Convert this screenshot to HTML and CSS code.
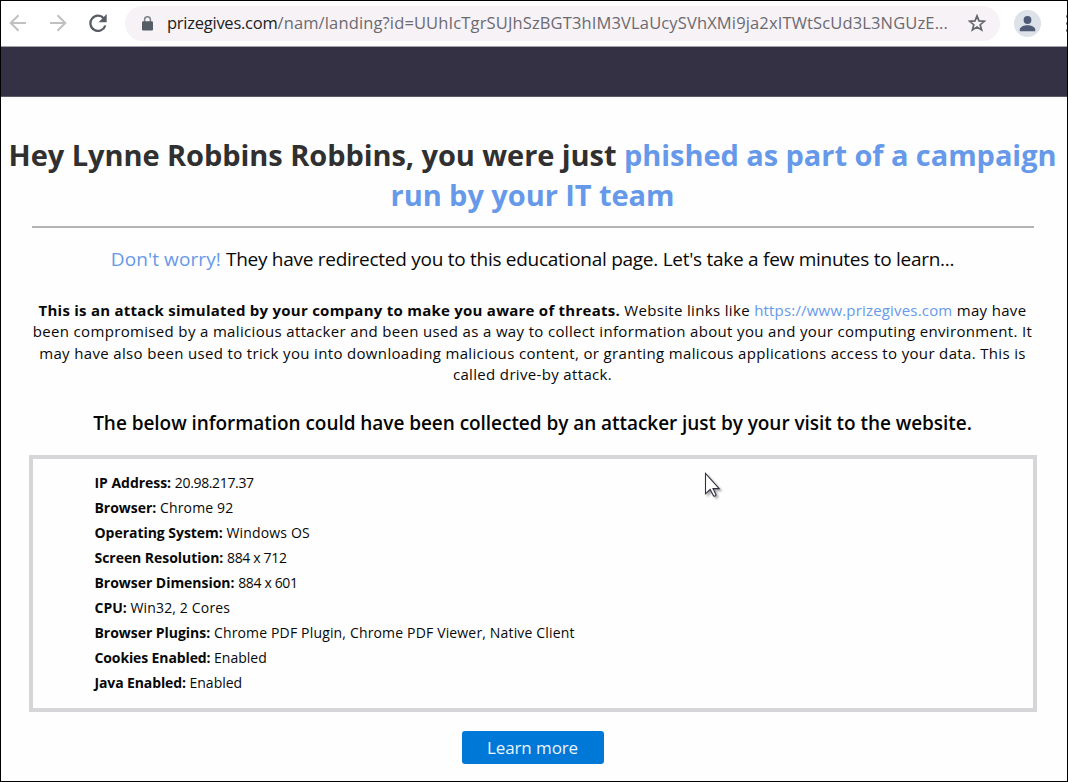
FILE: index.html
```html
<!DOCTYPE html>
<html lang="en">
<head>
<meta charset="utf-8">
<title>prizegives.com</title>
<link rel="stylesheet" href="styles.css">
</head>
<body>
<div class="window">
  <header class="toolbar">
    <svg class="nav-icon back" viewBox="0 0 18 18"><path d="M17 9H2M9.5 1.2 1.7 9l7.8 7.8"/></svg>
    <svg class="nav-icon forward" viewBox="0 0 18 18"><path d="M1 9h15M8.500 1.200 16.300 9l-7.800 7.800"/></svg>
    <svg class="reload" viewBox="0 0 18 18"><path class="arc" d="M14.700 4.200A7.600 7.600 0 1 0 16.300 11.500"/><path class="head" d="M17.700 0v8.200H9.600z"/></svg>
    <div class="address">
      <svg class="lock" viewBox="0 0 11 15"><path class="shackle" d="M2.600 6V3.700a2.900 2.900 0 0 1 5.800 0V6"/><rect y="5.200" width="11" height="9.300" rx="1.200"/></svg>
      <div class="url"><span class="host">prizegives.com</span><span class="path">/nam/landing?id=UUhIcTgrSUJhSzBGT3hIM3VLaUcySVhXMi9ja2xITWtScUd3L3NGUzE...</span></div>
      <svg class="star" viewBox="0 0 18 18"><path d="m9 1.900 2 5 5.400.4-4.200 3.400 1.400 5.300L9 13.100 4.400 16l1.400-5.300L1.600 7.300 7 6.900z"/></svg>
    </div>
    <svg class="avatar" viewBox="0 0 27 27"><circle class="disc" cx="13.500" cy="13.500" r="13.500"/><circle cx="13.500" cy="10" r="3.900"/><path d="M5.800 21.200v-1.700c0-2.700 4.600-4.200 7.700-4.200s7.700 1.500 7.700 4.200v1.700z"/></svg>
    <div class="menu"><i></i><i></i><i></i></div>
  </header>
  <div class="banner"></div>
  <main class="page">
    <h1>Hey Lynne Robbins Robbins, you were just <span class="blue">phished as part of a campaign<br>run by your IT team</span></h1>
    <hr>
    <p class="lead"><span class="blue worry">Don't worry! </span>They have redirected you to this educational page. Let's take a few minutes to learn...</p>
    <p class="body-text"><b>This is an attack simulated by your company to make you aware of threats.</b> Website links like <a class="blue">https://www.prizegives.com</a> may have<br>been compromised by a malicious attacker and been used as a way to collect information about you and your computing environment. It<br>may have also been used to trick you into downloading malicious content, or granting malicous applications access to your data. This is<br>called drive-by attack.</p>
    <h2>The below information could have been collected by an attacker just by your visit to the website.</h2>
    <ul class="details">
      <li><b>IP Address:</b> <span class="digits">20.98.217.37</span></li>
      <li><b>Browser:</b> Chrome 92</li>
      <li><b>Operating System:</b> Windows OS</li>
      <li><b>Screen Resolution:</b> <span class="digits">884 x 712</span></li>
      <li><b>Browser Dimension:</b> <span class="digits">884 x 601</span></li>
      <li><b>CPU:</b> Win32, 2 Cores</li>
      <li><b>Browser Plugins:</b> Chrome PDF Plugin, Chrome PDF Viewer, Native Client</li>
      <li class="tight"><b>Cookies Enabled:</b> Enabled</li>
      <li class="tight"><b>Java Enabled:</b> Enabled</li>
    </ul>
    <button class="learn">Learn more</button>
  </main>
  <svg class="cursor" viewBox="0 0 20 28"><path d="M1.500 1.500v20.300l4.600-4.300 3.600 6.500q1.800.5 2.300-1.200L9 16.600h6.200z"/></svg>
</div>
</body>
</html>
```
FILE: styles.css
```css
* { box-sizing: border-box; }
body { margin: 0; font-family: "Open Sans", "Noto Sans", sans-serif; color: #080808; background: #fff; }
.window { position: relative; width: 1068px; height: 782px; border: 1px solid #000; overflow: hidden; white-space: nowrap; background: #fefefe; }
.toolbar { display: flex; align-items: center; height: 46px; padding: 0 0 1px 8px; border-bottom: 1px solid #a4a3aa; background: #fff; }
.toolbar > * { flex: none; }
.nav-icon { width: 18px; height: 18px; fill: none; stroke: #c0c0c1; stroke-width: 2; }
.forward { margin-left: 22px; }
.reload { width: 18px; height: 18px; margin-left: 22px; }
.reload .arc { fill: none; stroke: #575c65; stroke-width: 2.300; }
.reload .head { fill: #575c65; }
.address { display: flex; align-items: center; width: 875px; height: 35px; margin-left: 18px; padding-left: 17px; border-radius: 18px; background: #f6f2f6; }
.lock { width: 11px; height: 15px; fill: #555d66; }
.lock .shackle { fill: none; stroke: #7c828a; stroke-width: 1.500; }
.url { width: 790px; margin-left: 14px; font-size: 16.5px; line-height: 24px; }
.host { letter-spacing: -0.25px; color: #202124; }
.path { letter-spacing: 0.14px; color: #6c6a70; }
.star { width: 18px; height: 18px; margin-left: 11px; fill: none; stroke: #66676b; stroke-width: 1.700; }
.avatar { width: 27px; height: 27px; margin-left: 14px; fill: #4f5b76; }
.avatar .disc { fill: #dce2e7; }
.menu { display: grid; gap: 4px; margin-left: 25px; }
.menu i { width: 3px; height: 3px; border-radius: 50%; background: #606368; }
.banner { height: 50px; background: #333143; border-bottom: 1px solid #5d5b69; }
.page { display: flex; flex-direction: column; align-items: center; padding: 38px 3px 0 0; text-align: center; }
.blue { color: #6699e9; }
h1 { margin: 0; font-size: 29px; line-height: 40px; font-weight: 700; letter-spacing: -0.06px; color: #303030; }
hr { width: 1002px; height: 2px; margin: 11px 0 0; border: 0; background: #b4b4b4; }
.lead { margin: 18px 0 0; font-size: 19px; line-height: 26px; letter-spacing: -0.27px; }
.worry { letter-spacing: 0.1px; }
.body-text { margin: 28px 0 0; font-size: 15px; line-height: 21.25px; letter-spacing: 0.34px; }
.body-text b { letter-spacing: 0.25px; }
.body-text a { letter-spacing: 0.18px; }
h2 { margin: 25px 0 0; font-size: 19px; line-height: 26px; font-weight: 600; letter-spacing: -0.05px; color: #050505; }
.details { width: 1008px; height: 257px; margin: 19px 0 0; padding: 11px 0 0 62px; border: 4px solid #d6d5d7; list-style: none; text-align: left; font-size: 14px; line-height: 25px; letter-spacing: 0.16px; }
.details b { letter-spacing: -0.04px; }
.details .digits { letter-spacing: -0.35px; }
.details .tight { letter-spacing: 0; }
.details .tight b { letter-spacing: -0.12px; }
.learn { width: 142px; height: 33px; margin: 19px 0 0; padding: 0; border: 0; border-radius: 3px; background: #0078d7; color: #eaf5fd; font-family: inherit; font-size: 17px; letter-spacing: -0.1px; }
.cursor { position: absolute; left: 703px; top: 471px; width: 20px; height: 28px; fill: #fff; stroke: #303040; stroke-width: 1.100; filter: drop-shadow(2px 2px 1px #0005); }
```
